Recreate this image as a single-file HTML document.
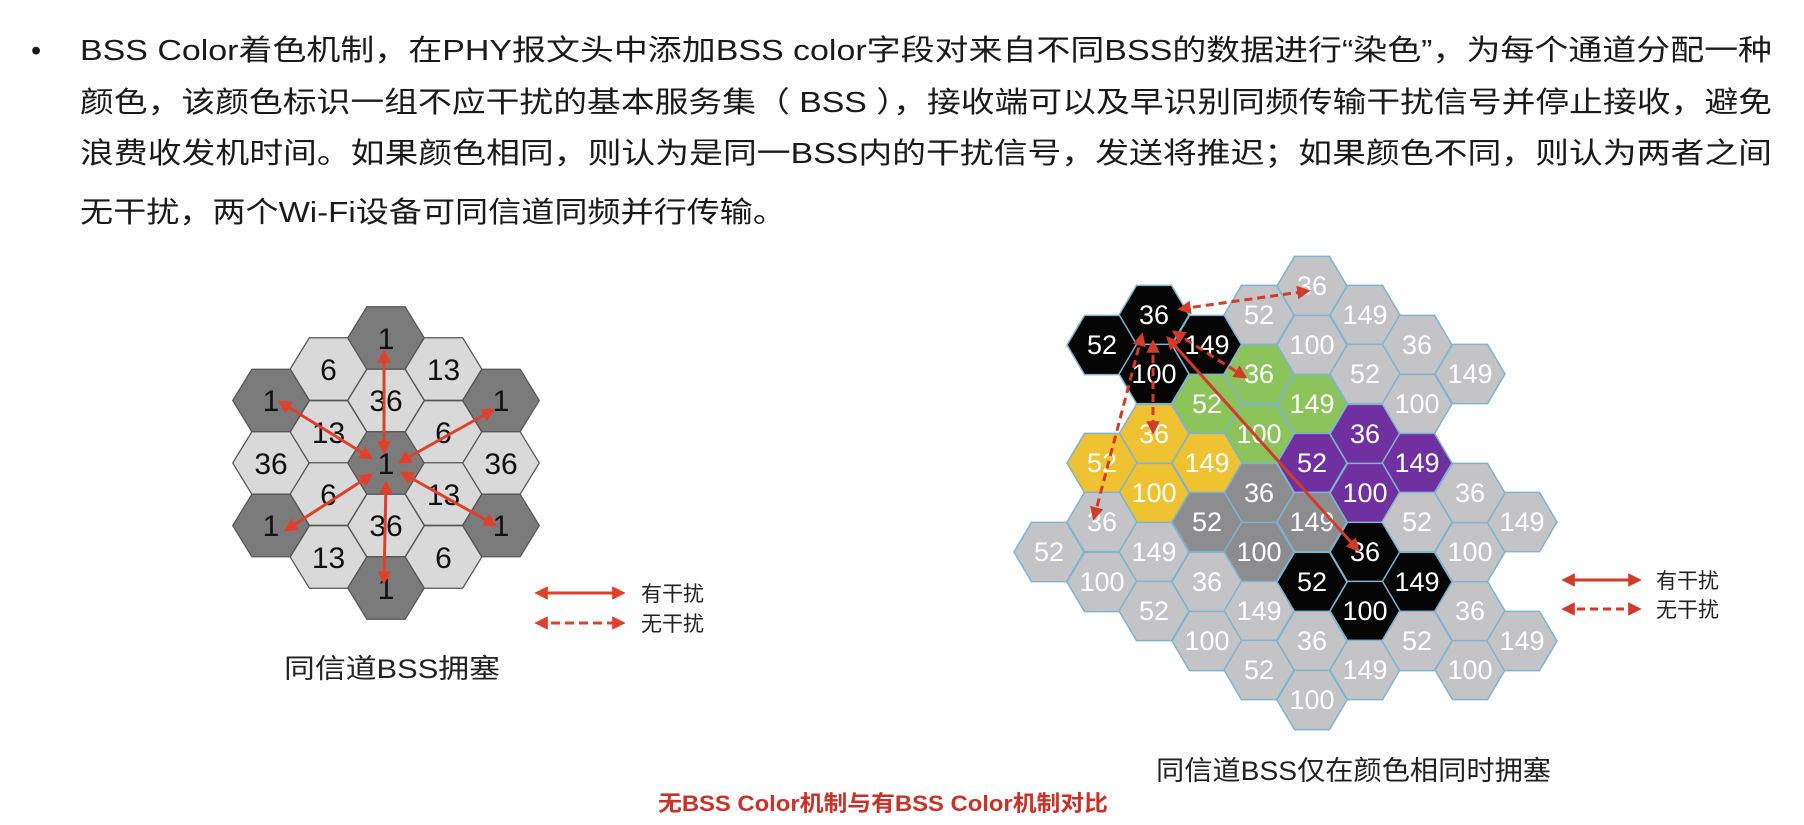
<!DOCTYPE html>
<html><head><meta charset="utf-8"><style>
html,body{margin:0;padding:0;background:#fff;width:1804px;height:825px;overflow:hidden}
svg{display:block}
.t{font-family:"Liberation Sans","Noto Sans CJK SC",sans-serif;font-size:29px;fill:#1a1a1a}
.nl{font-family:"Liberation Sans",sans-serif;font-size:30px;fill:#111;text-anchor:middle}
.nr{font-family:"Liberation Sans",sans-serif;font-size:27px;fill:#fff;text-anchor:middle}
.cap{font-family:"Liberation Sans","Noto Sans CJK SC",sans-serif;fill:#222}
</style></head><body>
<svg width="1804" height="825" viewBox="0 0 1804 825" xmlns="http://www.w3.org/2000/svg">
<defs>
<polygon id="hL" points="-38.3,0 -19.15,-31.25 19.15,-31.25 38.3,0 19.15,31.25 -19.15,31.25" stroke="#555" stroke-width="1.2"/>
<polygon id="hR" points="-35,0 -17.5,-29.6 17.5,-29.6 35,0 17.5,29.6 -17.5,29.6" stroke="#7fb3cf" stroke-width="1.5"/>
<marker id="ah" viewBox="0 0 10 10" refX="8" refY="5" markerWidth="4.5" markerHeight="4.5" orient="auto-start-reverse"><path d="M0,0L10,5L0,10z" fill="#e0402a"/></marker>
<marker id="ah2" viewBox="0 0 10 10" refX="8" refY="5" markerWidth="4.5" markerHeight="4.5" orient="auto-start-reverse"><path d="M0,0L10,5L0,10z" fill="#d23a2a"/></marker>
</defs>

<!-- paragraph -->
<text x="31" y="60" class="t">•</text>
<text x="80" y="60" class="t" textLength="1692" lengthAdjust="spacingAndGlyphs">BSS Color着色机制，在PHY报文头中添加BSS color字段对来自不同BSS的数据进行“染色”，为每个通道分配一种</text>
<text x="80" y="112" class="t" textLength="1692" lengthAdjust="spacingAndGlyphs">颜色，该颜色标识一组不应干扰的基本服务集（ BSS ），接收端可以及早识别同频传输干扰信号并停止接收，避免</text>
<text x="80" y="163" class="t" textLength="1692" lengthAdjust="spacingAndGlyphs">浪费收发机时间。如果颜色相同，则认为是同一BSS内的干扰信号，发送将推迟；如果颜色不同，则认为两者之间</text>
<text x="80" y="222" class="t" textLength="706" lengthAdjust="spacingAndGlyphs">无干扰，两个Wi-Fi设备可同信道同频并行传输。</text>

<!-- left diagram -->
<g>
<use href="#hL" x="271" y="400.5" fill="#7b7b7b"/><use href="#hL" x="271" y="463" fill="#d9d9d9"/><use href="#hL" x="271" y="525.5" fill="#7b7b7b"/>
<use href="#hL" x="328.5" y="369" fill="#d9d9d9"/><use href="#hL" x="328.5" y="432" fill="#d9d9d9"/><use href="#hL" x="328.5" y="494" fill="#d9d9d9"/><use href="#hL" x="328.5" y="557" fill="#d9d9d9"/>
<use href="#hL" x="386" y="338" fill="#7b7b7b"/><use href="#hL" x="386" y="400.5" fill="#d9d9d9"/><use href="#hL" x="386" y="463" fill="#7b7b7b"/><use href="#hL" x="386" y="525.5" fill="#d9d9d9"/><use href="#hL" x="386" y="588" fill="#7b7b7b"/>
<use href="#hL" x="443.5" y="369" fill="#d9d9d9"/><use href="#hL" x="443.5" y="432" fill="#d9d9d9"/><use href="#hL" x="443.5" y="494" fill="#d9d9d9"/><use href="#hL" x="443.5" y="557" fill="#d9d9d9"/>
<use href="#hL" x="501" y="400.5" fill="#7b7b7b"/><use href="#hL" x="501" y="463" fill="#d9d9d9"/><use href="#hL" x="501" y="525.5" fill="#7b7b7b"/>
<text class="nl" x="271" y="411">1</text><text class="nl" x="271" y="474">36</text><text class="nl" x="271" y="536">1</text>
<text class="nl" x="328.5" y="380">6</text><text class="nl" x="328.5" y="443">13</text><text class="nl" x="328.5" y="505">6</text><text class="nl" x="328.5" y="568">13</text>
<text class="nl" x="386" y="349">1</text><text class="nl" x="386" y="411">36</text><text class="nl" x="386" y="474">1</text><text class="nl" x="386" y="536">36</text><text class="nl" x="386" y="599">1</text>
<text class="nl" x="443.5" y="380">13</text><text class="nl" x="443.5" y="443">6</text><text class="nl" x="443.5" y="505">13</text><text class="nl" x="443.5" y="568">6</text>
<text class="nl" x="501" y="411">1</text><text class="nl" x="501" y="474">36</text><text class="nl" x="501" y="536">1</text>
<g stroke="#e0402a" stroke-width="3" fill="none" marker-start="url(#ah)" marker-end="url(#ah)">
<line x1="384" y1="452" x2="384" y2="352"/>
<line x1="386" y1="483" x2="384" y2="582"/>
<line x1="371" y1="458" x2="280" y2="402"/>
<line x1="400" y1="462" x2="493" y2="410"/>
<line x1="371" y1="475" x2="286" y2="530"/>
<line x1="402" y1="473" x2="495" y2="525"/>
<line x1="537" y1="593" x2="623" y2="593"/>
<line x1="537" y1="623" x2="623" y2="623" stroke-dasharray="9,5"/>
</g>
<text class="cap" x="641" y="601" font-size="21">有干扰</text>
<text class="cap" x="641" y="631" font-size="21">无干扰</text>
<text class="cap" x="284" y="678" font-size="27" textLength="216" lengthAdjust="spacingAndGlyphs">同信道BSS拥塞</text>
</g>

<!-- right diagram -->
<g>
<!-- black top -->
<use href="#hR" x="1154" y="315" fill="#050505"/><use href="#hR" x="1102" y="345" fill="#050505"/><use href="#hR" x="1207" y="345" fill="#050505"/><use href="#hR" x="1154" y="374" fill="#050505"/>
<!-- gray top -->
<use href="#hR" x="1312" y="286" fill="#c4c4c6"/><use href="#hR" x="1259" y="315" fill="#c4c4c6"/><use href="#hR" x="1365" y="315" fill="#c4c4c6"/><use href="#hR" x="1312" y="345" fill="#c4c4c6"/><use href="#hR" x="1417" y="345" fill="#c4c4c6"/><use href="#hR" x="1365" y="374" fill="#c4c4c6"/><use href="#hR" x="1470" y="374" fill="#c4c4c6"/><use href="#hR" x="1417" y="404" fill="#c4c4c6"/>
<!-- green -->
<use href="#hR" x="1259" y="374" fill="#8cc35a"/><use href="#hR" x="1207" y="404" fill="#8cc35a"/><use href="#hR" x="1312" y="404" fill="#8cc35a"/><use href="#hR" x="1259" y="434" fill="#8cc35a"/>
<!-- yellow -->
<use href="#hR" x="1154" y="434" fill="#efc232"/><use href="#hR" x="1102" y="463" fill="#efc232"/><use href="#hR" x="1207" y="463" fill="#efc232"/><use href="#hR" x="1154" y="493" fill="#efc232"/>
<!-- purple -->
<use href="#hR" x="1365" y="434" fill="#7030a0"/><use href="#hR" x="1312" y="463" fill="#7030a0"/><use href="#hR" x="1417" y="463" fill="#7030a0"/><use href="#hR" x="1365" y="493" fill="#7030a0"/>
<!-- dark gray -->
<use href="#hR" x="1259" y="493" fill="#8d8d8f"/><use href="#hR" x="1207" y="522" fill="#8d8d8f"/><use href="#hR" x="1312" y="522" fill="#8d8d8f"/><use href="#hR" x="1259" y="552" fill="#8d8d8f"/>
<!-- black bottom -->
<use href="#hR" x="1365" y="552" fill="#050505"/><use href="#hR" x="1312" y="582" fill="#050505"/><use href="#hR" x="1417" y="582" fill="#050505"/><use href="#hR" x="1365" y="611" fill="#050505"/>
<!-- gray others -->
<use href="#hR" x="1102" y="522" fill="#c4c4c6"/><use href="#hR" x="1049" y="552" fill="#c4c4c6"/><use href="#hR" x="1154" y="552" fill="#c4c4c6"/><use href="#hR" x="1102" y="582" fill="#c4c4c6"/><use href="#hR" x="1154" y="611" fill="#c4c4c6"/><use href="#hR" x="1207" y="582" fill="#c4c4c6"/><use href="#hR" x="1259" y="611" fill="#c4c4c6"/><use href="#hR" x="1207" y="641" fill="#c4c4c6"/><use href="#hR" x="1259" y="670" fill="#c4c4c6"/><use href="#hR" x="1312" y="641" fill="#c4c4c6"/><use href="#hR" x="1312" y="700" fill="#c4c4c6"/><use href="#hR" x="1365" y="670" fill="#c4c4c6"/><use href="#hR" x="1417" y="641" fill="#c4c4c6"/><use href="#hR" x="1470" y="670" fill="#c4c4c6"/><use href="#hR" x="1470" y="611" fill="#c4c4c6"/><use href="#hR" x="1522" y="641" fill="#c4c4c6"/><use href="#hR" x="1470" y="552" fill="#c4c4c6"/><use href="#hR" x="1522" y="522" fill="#c4c4c6"/><use href="#hR" x="1470" y="493" fill="#c4c4c6"/><use href="#hR" x="1417" y="522" fill="#c4c4c6"/>
<g class="nr">
<text x="1154" y="324">36</text><text x="1102" y="354">52</text><text x="1207" y="354">149</text><text x="1154" y="383">100</text>
<text x="1312" y="295">36</text><text x="1259" y="324">52</text><text x="1365" y="324">149</text><text x="1312" y="354">100</text><text x="1417" y="354">36</text><text x="1365" y="383">52</text><text x="1470" y="383">149</text><text x="1417" y="413">100</text>
<text x="1259" y="383">36</text><text x="1207" y="413">52</text><text x="1312" y="413">149</text><text x="1259" y="443">100</text>
<text x="1154" y="443">36</text><text x="1102" y="472">52</text><text x="1207" y="472">149</text><text x="1154" y="502">100</text>
<text x="1365" y="443">36</text><text x="1312" y="472">52</text><text x="1417" y="472">149</text><text x="1365" y="502">100</text>
<text x="1259" y="502">36</text><text x="1207" y="531">52</text><text x="1312" y="531">149</text><text x="1259" y="561">100</text>
<text x="1365" y="561">36</text><text x="1312" y="591">52</text><text x="1417" y="591">149</text><text x="1365" y="620">100</text>
<text x="1102" y="531">36</text><text x="1049" y="561">52</text><text x="1154" y="561">149</text><text x="1102" y="591">100</text><text x="1154" y="620">52</text><text x="1207" y="591">36</text><text x="1259" y="620">149</text><text x="1207" y="650">100</text><text x="1259" y="679">52</text><text x="1312" y="650">36</text><text x="1312" y="709">100</text><text x="1365" y="679">149</text><text x="1417" y="650">52</text><text x="1470" y="679">100</text><text x="1470" y="620">36</text><text x="1522" y="650">149</text><text x="1470" y="561">100</text><text x="1522" y="531">149</text><text x="1470" y="502">36</text><text x="1417" y="531">52</text>
</g>
<g stroke="#d23a2a" stroke-width="3" fill="none" marker-start="url(#ah2)" marker-end="url(#ah2)">
<line x1="1180" y1="309" x2="1308" y2="291" stroke-dasharray="8,5"/>
<line x1="1174" y1="332" x2="1245" y2="377" stroke-dasharray="8,5"/>
<line x1="1168" y1="338" x2="1358" y2="550"/>
<line x1="1153" y1="342" x2="1153" y2="432" stroke-dasharray="8,5"/>
<line x1="1142" y1="335" x2="1094" y2="518" stroke-dasharray="8,5"/>
<line x1="1564" y1="580" x2="1639" y2="580"/>
<line x1="1564" y1="609" x2="1639" y2="609" stroke-dasharray="8,5"/>
</g>
<text class="cap" x="1656" y="588" font-size="21">有干扰</text>
<text class="cap" x="1656" y="617" font-size="21">无干扰</text>
<text class="cap" x="1156" y="780" font-size="27" textLength="395" lengthAdjust="spacingAndGlyphs">同信道BSS仅在颜色相同时拥塞</text>
</g>

<text x="658" y="811" font-family="Liberation Sans,Noto Sans CJK SC,sans-serif" font-size="22" font-weight="bold" fill="#c8322a" textLength="450" lengthAdjust="spacingAndGlyphs">无BSS Color机制与有BSS Color机制对比</text>
</svg>
</body></html>
